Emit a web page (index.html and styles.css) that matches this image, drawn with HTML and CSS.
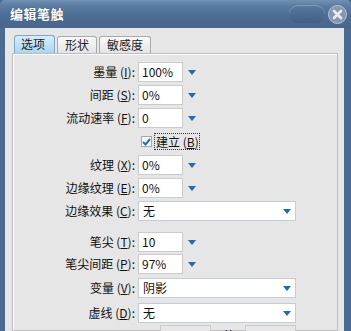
FILE: index.html
```html
<!DOCTYPE html>
<html>
<head>
<meta charset="utf-8">
<link rel="stylesheet" href="styles.css">
</head>
<body>
<div class="window">
  <div class="titlebar">
    <span class="title">编辑笔触</span>
    <div class="tb-buttons">
      <span class="pill"></span>
      <span class="close">
        <svg width="19" height="19" viewBox="0 0 19 19">
          <circle cx="9.5" cy="9.5" r="9" fill="#8798ae" stroke="#b8c4d2" stroke-width="1"/>
          <path d="M6 6 L13 13 M13 6 L6 13" stroke="#e8edf3" stroke-width="2.6" stroke-linecap="round"/>
        </svg>
      </span>
    </div>
  </div>
  <div class="frame">
    <div class="content">
      <div class="tabs">
        <div class="tab active">选项</div>
        <div class="tab">形状</div>
        <div class="tab">敏感度</div>
      </div>
      <div class="panel">
        <div class="row"><span class="label">墨量 (<u>I</u>):</span><span class="field">100%</span><span class="arrow"></span></div>
        <div class="row"><span class="label">间距 (<u>S</u>):</span><span class="field">0%</span><span class="arrow"></span></div>
        <div class="row"><span class="label">流动速率 (<u>F</u>):</span><span class="field">0</span><span class="arrow"></span></div>
        <div class="row check-row"><span class="checkbox"><svg width="9" height="8" viewBox="0 0 9 8"><path d="M1 4 L3.5 6.5 L8 1" fill="none" stroke="#1f6fc0" stroke-width="2"/></svg></span><span class="check-label">建立 (<u>B</u>)</span></div>
        <div class="row gap-top"><span class="label">纹理 (<u>X</u>):</span><span class="field">0%</span><span class="arrow"></span></div>
        <div class="row"><span class="label">边缘纹理 (<u>E</u>):</span><span class="field">0%</span><span class="arrow"></span></div>
        <div class="row"><span class="label">边缘效果 (<u>C</u>):</span><span class="select">无<span class="arrow in"></span></span></div>
        <div class="row group"><span class="label">笔尖 (<u>T</u>):</span><span class="field">10</span><span class="arrow"></span></div>
        <div class="row tight"><span class="label">笔尖间距 (<u>P</u>):</span><span class="field">97%</span><span class="arrow"></span></div>
        <div class="row loose"><span class="label">变量 (<u>V</u>):</span><span class="select">阴影<span class="arrow in"></span></span></div>
        <div class="row looser"><span class="label">虚线 (<u>D</u>):</span><span class="select">无<span class="arrow in"></span></span></div>
        <div class="row last"><span class="label">一</span><span class="field wide"></span><span class="xlabel">X:</span><span class="field wide"></span></div>
      </div>
    </div>
  </div>
</div>
</body>
</html>
```

FILE: styles.css
```css
html, body {
  margin: 0;
  padding: 0;
  background: #e6e6e6;
}
body {
  width: 351px;
  height: 331px;
  overflow: hidden;
  font-family: "Noto Sans CJK SC", "Noto Sans", sans-serif;
  font-size: 12px;
  color: #111;
}
.window {
  width: 351px;
  height: 331px;
  display: flex;
  flex-direction: column;
  background: #4b6a91;
  overflow: hidden;
}
.titlebar {
  height: 28px;
  flex: none;
  display: flex;
  align-items: center;
  justify-content: space-between;
  padding: 0 4px 0 10px;
  background: linear-gradient(to bottom, #7391b6 0px, #5a7ba2 6px, #4c6c93 16px, #46668d 28px);
  border-radius: 5px 5px 0 0;
}
.title {
  color: #fff;
  font-weight: bold;
  font-size: 13px;
  line-height: 16px;
  letter-spacing: 0.5px;
  text-shadow: 0 0 1px #2c4566;
}
.tb-buttons {
  display: flex;
  align-items: center;
  gap: 3px;
}
.pill {
  width: 36px;
  height: 18px;
  border-radius: 9px;
  background: linear-gradient(to bottom, #5b7aa0, #3f5f86);
  box-shadow: inset 0 1px 1px rgba(255,255,255,0.25);
}
.close {
  display: flex;
  width: 19px;
  height: 19px;
}
.frame {
  flex: 1;
  display: flex;
  padding: 0 7px 0 5px;
  min-height: 0;
}
.content {
  flex: 1;
  background: #e6e6e6;
  padding: 8px 6px 0 7px;
  display: flex;
  flex-direction: column;
  min-height: 0;
}
.tabs {
  display: flex;
  gap: 2px;
  padding-left: 2px;
  height: 17px;
  flex: none;
  align-items: flex-end;
  position: relative;
  z-index: 1;
}
.tab {
  height: 16px;
  line-height: 16px;
  padding: 0 7px;
  border: 1px solid #a9a9a9;
  border-bottom: none;
  border-radius: 3px 3px 0 0;
  background: linear-gradient(to bottom, #fafafa, #e4e4e4);
  color: #222;
}
.tab.active {
  height: 17px;
  border-color: #7ea8c8;
  background: linear-gradient(to bottom, #d6edfb, #a8d6f4);
  padding: 0 9px 0 6px;
}
.panel {
  flex: 1;
  border: 1px solid #bdbdbd;
  box-shadow: inset 1px 1px 0 #fff;
  background: #e6e6e6;
  padding-top: 8px;
  display: flex;
  flex-direction: column;
  gap: 3px;
  min-height: 0;
}
.row {
  display: flex;
  align-items: center;
  height: 20px;
  flex: none;
}
.label {
  width: 122px;
  text-align: right;
  margin-right: 3px;
  line-height: 20px;
  white-space: nowrap;
}
.label u, .check-label u {
  text-decoration: underline;
  text-underline-offset: 1px;
}
.field {
  width: 40px;
  height: 18px;
  line-height: 18px;
  padding-left: 3px;
  background: #fff;
  border: 1px solid #cbcbcb;
}
.field.wide {
  width: 46px;
  background: #e6e6e6;
}
.arrow {
  width: 0;
  height: 0;
  margin-left: 5px;
  border-left: 4px solid transparent;
  border-right: 4px solid transparent;
  border-top: 5px solid #1d6cb8;
}
.arrow.in {
  margin-left: auto;
  margin-right: 4px;
}
.select {
  width: 152px;
  height: 18px;
  line-height: 18px;
  padding-left: 4px;
  display: flex;
  align-items: center;
  background: #fff;
  border: 1px solid #c3cdd6;
}
.check-row {
  height: 17px;
  margin-top: 2px;
  padding-left: 128px;
}
.checkbox {
  width: 9px;
  height: 9px;
  border: 1px solid #9aaab9;
  background: #fff;
  display: flex;
  align-items: center;
  justify-content: center;
  margin-right: 2px;
}
.check-label {
  border: 1px dotted #333;
  padding: 0 0 0 1px;
  line-height: 15px;
}
.gap-top {
  margin-top: 2px;
}
.group {
  margin-top: 8px;
}
.tight {
  margin-top: -1px;
}
.loose {
  margin-top: 1px;
}
.looser {
  margin-top: 2px;
}
.last {
  margin-top: -1px;
  align-items: flex-start;
}
.last .label {
  width: 12px;
  margin-left: 116px;
  margin-right: 3px;
  text-align: left;
  line-height: 18px;
}
.last .field.wide {
  margin-left: 16px;
}
.xlabel {
  margin-left: 14px;
  width: 20px;
  line-height: 18px;
}
.last .xlabel + .field.wide {
  margin-left: 0;
}
```
